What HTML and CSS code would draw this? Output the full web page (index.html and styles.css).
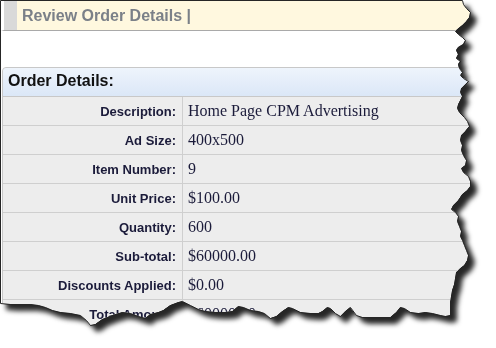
FILE: index.html
```html
<!DOCTYPE html>
<html lang="en">
<head>
  <meta charset="UTF-8">
  <title>Review Order Details</title>
  <link rel="stylesheet" href="styles.css">
</head>

<body>

<div class="sheet">
  <!-- torn paper outline, used both as clip and as the dark edge line -->
  <svg class="edge" width="496" height="348" viewBox="0 0 496 348">
    <defs>
      <polygon id="tear-shape" points="0,0 462,0 463,4 466,8 470,12 469,17 466,21 462,25 457,29 455,31 458,34 462,37 465,40 463,44 458,47 456,50 458,54 456,58 460,61 458,64 459,68 462,72 460,75 463,78 468,81 465,84 461,88 460,92 462,96 460,100 458,104 457,108 459,112 464,117 467,121 469,126 465,131 461,135 460,140 462,145 461,150 463,155 466,160 465,165 461,168 463,172 468,176 470,181 470,186 467,190 462,194 458,200 453,205 451,209 455,212 458,216 457,221 459,226 461,231 460,236 462,240 464,245 466,250 468,255 467,260 464,265 460,268 456,272 455,278 454,284 452,290 451,296 450,302 450,310 450,315 445,316 440,315 432,313 425,312 418,313 410,312 404,308 400,307 396,312 390,317 380,317 370,317 362,317 356,315 350,307 345,311 340,316 335,313 330,308 327,307 322,311 318,313 310,313 300,312 292,308 288,307 282,311 276,316 270,318 264,313 258,311 250,310 243,307 238,306 232,311 225,312 215,312 205,311 198,309 190,305 182,301 178,302 170,305 163,310 158,312 150,314 145,318 138,316 130,313 122,312 112,315 102,319 95,324 90,325 86,320 80,315 70,313 60,312 52,310 45,307 38,305 30,304 20,304 10,304 0,303"/>
      <clipPath id="tear">
        <use href="#tear-shape"/>
      </clipPath>
    </defs>
  </svg>

  <div class="paper">
    <div class="title-bar">
      <span class="tab"></span>
      <h1>Review Order Details |</h1>
    </div>

    <div class="panel">
      <div class="panel-head">Order Details:</div>
      <table class="details">
        <tr><td class="label">Description:</td><td class="value">Home Page CPM Advertising</td></tr>
        <tr><td class="label">Ad Size:</td><td class="value">400x500</td></tr>
        <tr><td class="label">Item Number:</td><td class="value">9</td></tr>
        <tr><td class="label">Unit Price:</td><td class="value">$100.00</td></tr>
        <tr><td class="label">Quantity:</td><td class="value">600</td></tr>
        <tr><td class="label">Sub-total:</td><td class="value">$60000.00</td></tr>
        <tr><td class="label">Discounts Applied:</td><td class="value">$0.00</td></tr>
        <tr><td class="label">Total Amount:</td><td class="value">$60000.00</td></tr>
      </table>
    </div>
  </div>

  <svg class="edge outline" width="496" height="348" viewBox="0 0 496 348">
    <use href="#tear-shape" transform="translate(.5 .5)"/>
  </svg>
</div>

</body>
</html>
```

FILE: styles.css
```css
body {
  margin: 0;
  background: #fff;
  font-family: 'Liberation Sans', Arial, sans-serif;
}
.sheet {
  position: relative;
  width: 496px;
  height: 348px;
  filter: drop-shadow(6px 6px 2.5px rgba(0, 0, 0, 0.85));
}
.edge {
  position: absolute;
  top: 0;
  left: 0;
  pointer-events: none;
}
.outline use {
  fill: none;
  stroke: #262626;
  stroke-width: 1;
}
.paper {
  height: 100%;
  padding: 1px 0 0 1px;
  box-sizing: border-box;
  background: #fff;
  clip-path: url(#tear);
  overflow: hidden;
}
.title-bar {
  display: flex;
  height: 29px;
  width: 600px;
  background: #fff8df;
  border-left: 3px solid #fff;
  border-bottom: 1px solid #a9a9a9;
}
.tab {
  width: 13px;
  background: #d9d9d9;
}
.title-bar h1 {
  margin: 0 0 0 5px;
  font-size: 16px;
  line-height: 29px;
  font-weight: bold;
  color: #7b8088;
}
.panel {
  margin: 36px 0 0 1px;
  width: 600px;
  border: 1px solid #c8c8c8;
  border-radius: 4px 0 0 0;
  background: #ededed;
}
.panel-head {
  height: 26px;
  line-height: 26px;
  padding: 0 0 2px 5px;
  font-size: 16px;
  font-weight: bold;
  color: #111;
  border-radius: 4px 0 0 0;
  background: linear-gradient(#eef4fc, #dbe7f7);
  border-bottom: 1px solid #c8c8c8;
}
.details {
  border-collapse: separate;
  border-spacing: 0;
  width: 100%;
}
.details td {
  height: 28px;
  padding: 0;
  border-bottom: 1px solid #cfcfcf;
  color: #1b1b3a;
}
.details .label {
  width: 173px;
  padding-right: 6px;
  text-align: right;
  font-size: 13px;
  font-weight: bold;
  border-right: 1px solid #cfcfcf;
}
.details .value {
  padding-left: 5px;
  font-family: 'Liberation Serif', 'Times New Roman', serif;
  font-size: 16px;
}
```
